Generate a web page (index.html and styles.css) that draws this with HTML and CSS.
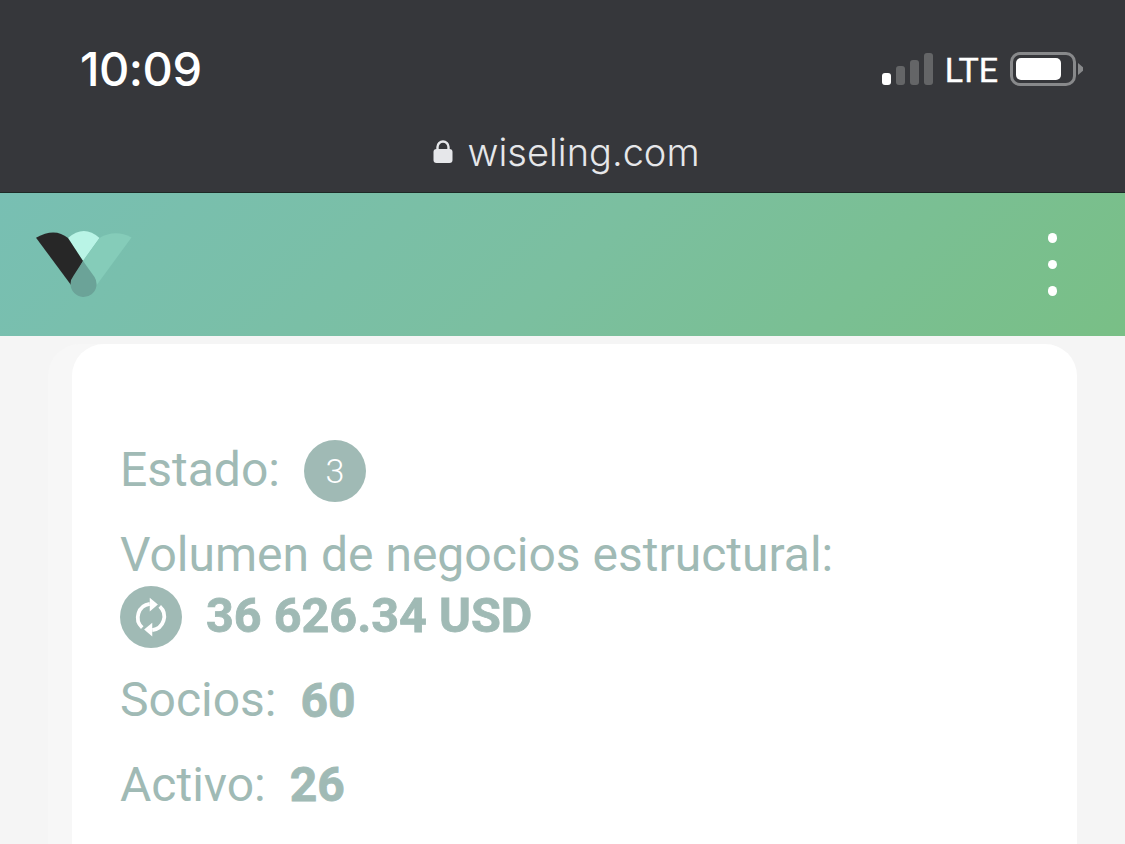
FILE: index.html
```html
<!DOCTYPE html>
<html lang="es">
<head>
<meta charset="utf-8">
<title>Wiseling</title>
<link rel="stylesheet" href="styles.css">
</head>
<body>
<div class="browser">
  <div class="status">
    <span class="time">10:09</span>
    <div class="indicators">
      <div class="signal"><i class="on s1"></i><i class="s2"></i><i class="s3"></i><i class="s4"></i></div>
      <span class="lte">LTE</span>
      <div class="battery"><div class="level"></div></div>
      <div class="nub"></div>
    </div>
  </div>
  <div class="address">
    <svg class="lock" viewBox="0 0 20 24" width="20" height="24"><path d="M4.5 10V7a5.5 5.5 0 0 1 11 0v3" fill="none" stroke="#e6e7ea" stroke-width="2.4"/><rect x="0.5" y="9" width="19" height="14" rx="3" fill="#e6e7ea"/></svg>
    <span class="url">wiseling.com</span>
  </div>
</div>
<header class="topbar">
  <svg class="logo" viewBox="34 228 100 72" width="100" height="72">
    <path d="M68 238Q84 224 99.500 238L83 261Z" fill="#b9f4e6"/>
    <path d="M99.500 238Q115 229 131.500 237.500L96.700 285 83 261Z" fill="#85ccb9"/>
    <path d="M36 237.700Q55 227 68 238L83 261 71 285Z" fill="#272727"/>
    <path d="M83 261L94.500 277A13 13 0 1 1 73.500 275.700Z" fill="#6ba398"/>
  </svg>
  <div class="kebab"><i></i><i></i><i></i></div>
</header>
<main class="page">
  <section class="card">
    <div class="row r-state"><span class="label">Estado:</span><span class="badge">3</span></div>
    <div class="row r-volume"><span class="label">Volumen de negocios estructural:</span></div>
    <div class="row r-amount">
      <span class="badge">
        <svg viewBox="0 0 32 32" width="40" height="40"><g fill="none" stroke="#fff" stroke-width="3"><path d="M9 24.500A11 11 0 0 1 15 5.500"/><path d="M23 7.500A11 11 0 0 1 17 26.500"/></g><path d="M15 0.500L21.500 6 15 11.500Z" fill="#fff"/><path d="M17 20.500L10.500 26 17 31.500Z" fill="#fff"/></svg>
      </span>
      <strong>36 626.34 USD</strong>
    </div>
    <div class="row r-partners"><span class="label">Socios:</span><strong>60</strong></div>
    <div class="row r-active"><span class="label">Activo:</span><strong>26</strong></div>
  </section>
</main>
</body>
</html>
```
FILE: styles.css
```css
* { box-sizing: border-box; }
html, body { margin: 0; height: 844px; overflow: hidden; }
body { font-family: Roboto, "Liberation Sans", sans-serif; background: #f5f5f5; }
.browser { height: 193px; background: #36373b; border-bottom: 1px solid #1d2a26; }
.status { display: flex; justify-content: space-between; align-items: center; height: 130px; padding: 6px 42px 0 80px; }
.time { font-family: Inter, sans-serif; font-size: 47px; font-weight: 500; color: #fff; letter-spacing: -0.5px; }
.indicators { display: flex; align-items: center; padding-top: 0; }
.signal { display: flex; align-items: flex-end; gap: 5px; height: 33px; margin-right: 12px; }
.signal i { width: 9px; background: #646567; border-radius: 3px; }
.signal .on { background: #fff; }
.s1 { height: 12px; }
.s2 { height: 19px; }
.s3 { height: 25px; }
.s4 { height: 32px; }
.lte { font-family: Roboto, sans-serif; font-size: 34px; font-weight: 400; -webkit-text-stroke: 0.4px #fff; color: #fff; margin-right: 12px; padding-top: 4px; }
.battery { width: 66px; height: 34px; border: 3px solid #88898b; border-radius: 10px; padding: 3px; margin-top: 2px; }
.level { width: 45px; height: 22px; background: #fff; border-radius: 5px; }
.nub { width: 5px; height: 12px; margin: 2px 0 0 2px; background: #88898b; clip-path: polygon(0 0, 100% 35%, 100% 65%, 0 100%); }
.address { display: flex; justify-content: center; align-items: center; gap: 14px; height: 44px; padding-left: 8px; }
.lock { display: block; }
.url { font-family: Inter, sans-serif; font-size: 38px; font-weight: 300; color: #e6e7ea; }
.topbar { display: flex; justify-content: space-between; align-items: flex-start; height: 143px; padding: 35px 68px 0 34px; background: linear-gradient(135deg, #78bfb3 0%, #7bbfa0 50%, #79bf86 100%); }
.logo { display: block; }
.kebab { display: flex; flex-direction: column; gap: 17px; padding-top: 5px; }
.kebab i { width: 9.5px; height: 9.5px; border-radius: 50%; background: #fff; }
.page { padding: 8px 48px 0 72px; }
.card { width: 1005px; height: 500px; padding: 96px 48px 0; background: #fff; border-radius: 32px 32px 0 0; box-shadow: -24px 0 0 0 #f7f7f7; color: #a0bab5; font-size: 48px; }
.row { display: flex; align-items: center; }
.label { font-weight: 400; }
.badge { display: flex; align-items: center; justify-content: center; width: 62px; height: 62px; border-radius: 50%; background: #a0bab5; color: #fff; font-size: 34px; font-weight: 300; }
strong { font-weight: 700; -webkit-text-stroke: 0.8px #a0bab5; }
.r-state { height: 62px; gap: 24px; }
.r-state .label { margin-bottom: 3px; }
.r-volume { margin-top: 21px; height: 62px; }
.r-amount { height: 62px; gap: 24px; margin-top: 1px; }
.r-amount strong { font-size: 48.5px; margin-bottom: 3px; }
.r-partners { margin-top: 21px; height: 62px; gap: 24px; }
.r-partners .label { margin-bottom: 2px; }
.r-active { margin-top: 22px; height: 62px; gap: 24px; }
.r-active .label { margin-bottom: 0; }
```
